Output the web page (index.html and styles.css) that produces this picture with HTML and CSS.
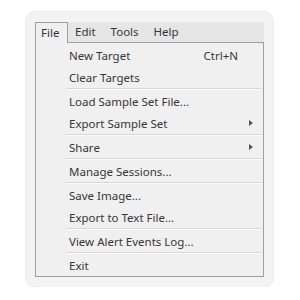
FILE: index.html
```html
<!DOCTYPE html>
<html>
<head>
<meta charset="utf-8">
<link rel="stylesheet" href="styles.css">
</head>
<body>
<div class="card">
  <div class="menubar">
    <div class="top open">File</div>
    <div class="top">Edit</div>
    <div class="top">Tools</div>
    <div class="top">Help</div>
  </div>
  <div class="dropdown">
    <div class="item"><span class="label">New Target</span><span class="key">Ctrl+N</span><span class="sub"></span></div>
    <div class="item"><span class="label">Clear Targets</span><span class="sub"></span></div>
    <div class="sep"></div>
    <div class="item"><span class="label">Load Sample Set File...</span><span class="sub"></span></div>
    <div class="item"><span class="label">Export Sample Set</span><span class="sub"><i class="arrow"></i></span></div>
    <div class="sep"></div>
    <div class="item"><span class="label">Share</span><span class="sub"><i class="arrow"></i></span></div>
    <div class="sep"></div>
    <div class="item"><span class="label">Manage Sessions...</span><span class="sub"></span></div>
    <div class="sep"></div>
    <div class="item"><span class="label">Save Image...</span><span class="sub"></span></div>
    <div class="item"><span class="label">Export to Text File...</span><span class="sub"></span></div>
    <div class="sep"></div>
    <div class="item"><span class="label">View Alert Events Log...</span><span class="sub"></span></div>
    <div class="sep"></div>
    <div class="item"><span class="label">Exit</span><span class="sub"></span></div>
  </div>
</div>
</body>
</html>
```
FILE: styles.css
```css
html, body {
  margin: 0;
  padding: 0;
  background: #ffffff;
}
body {
  font-family: "Noto Sans", "Open Sans", sans-serif;
  font-size: 11.5px;
  color: #363636;
}
.card {
  box-sizing: border-box;
  width: 247px;
  margin: 12px 0 0 26px;
  padding: 10px 9px 10px 9px;
  background: #f3f3f3;
  border-radius: 10px;
  box-shadow: 0 0 0 1px #ececec;
}
.menubar {
  display: flex;
  align-items: flex-start;
  height: 20px;
  background: #e6e6e6;
}
.top {
  box-sizing: border-box;
  height: 20px;
  line-height: 19px;
  padding: 0 8px 0 7px;
}
.top.open {
  position: relative;
  z-index: 1;
  height: 21px;
  width: 33px;
  padding: 0 0 0 5px;
  background: #f0f0f0;
  border: 1px solid #a0a0a0;
  border-bottom: none;
}
.dropdown {
  border: 1px solid #a0a0a0;
  padding-top: 1px;
  background: #f0f0f0;
}
.item {
  display: flex;
  align-items: center;
  height: 22px;
  padding-left: 33px;
}
.label {
  flex: 1;
}
.key {
  margin-right: 2px;
}
.sub {
  width: 23px;
  height: 22px;
  display: flex;
  align-items: center;
  padding-left: 9px;
  box-sizing: border-box;
}
.arrow {
  width: 0;
  height: 0;
  border-left: 4px solid #555;
  border-top: 3.5px solid transparent;
  border-bottom: 3.5px solid transparent;
}
.sep {
  height: 1px;
  margin: 0 1px 0 30px;
  background: #d8d8d8;
  border-bottom: 1px solid #fafafa;
}
```
